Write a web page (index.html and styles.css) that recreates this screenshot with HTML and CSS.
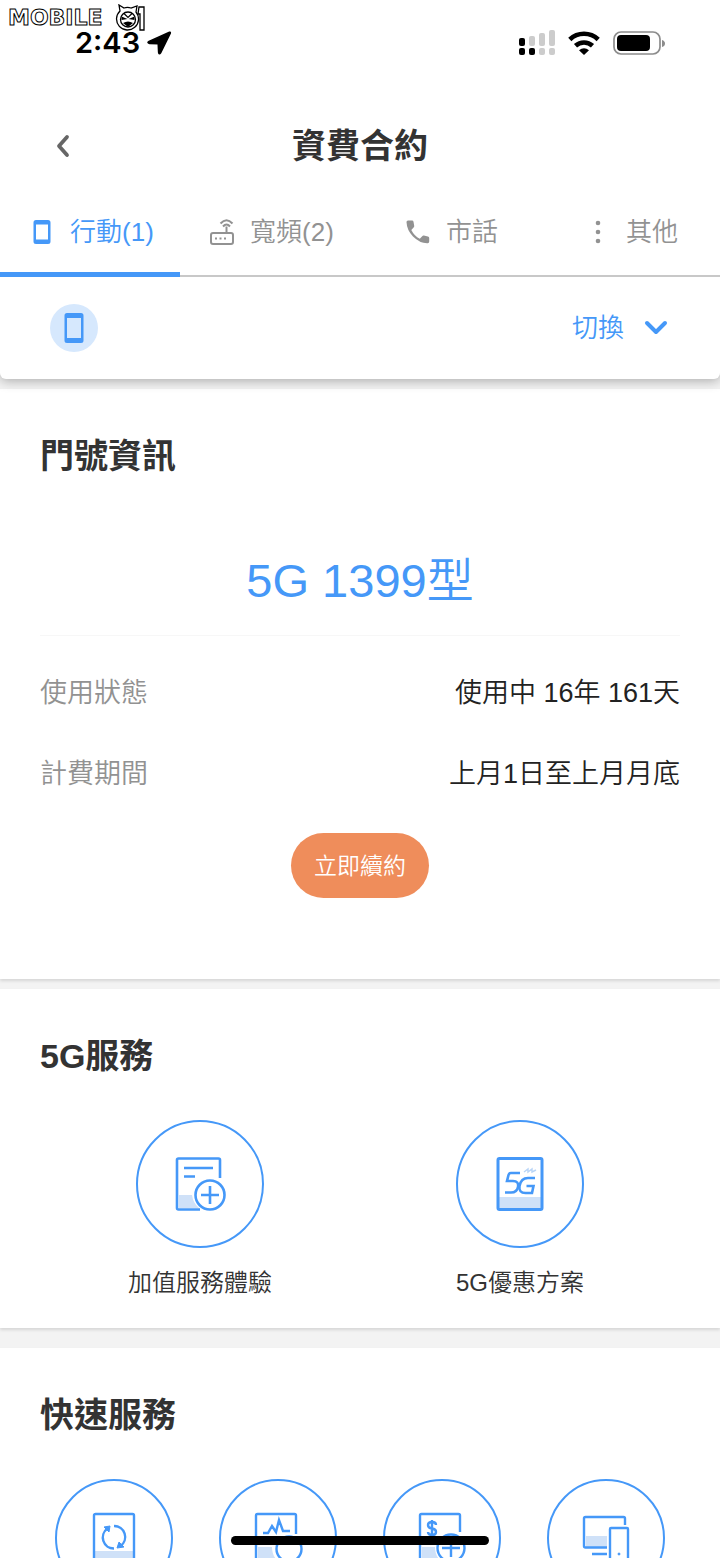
FILE: index.html
```html
<!DOCTYPE html>
<html lang="zh-Hant">
<head>
<meta charset="utf-8">
<meta name="viewport" content="width=device-width, initial-scale=1">
<title>資費合約</title>
<link rel="stylesheet" href="styles.css">
</head>
<body>
<div class="app">
  <div class="watermark">
    <span class="watermark-word">MOBILE</span>
    <svg class="watermark-face" width="32" height="28" viewBox="0 0 32 28" fill="#fff" stroke="#000" stroke-width="1.3">
      <path d="M25 3h5v23h-4V10h-2z"/>
      <path d="M6 7 5 1l5 3a12 12 0 0 1 7 0l6-2-1 6a11 11 0 1 1-16-1z"/>
      <circle cx="14" cy="15.500" r="7.500"/>
      <path fill="#000" stroke="none" d="m7.500 12.500 6 2.500-6 1zM20.500 12.500 14.500 15l6 1zM9 19q5-3 10 0l-5 4z"/>
      <path d="m10 9.500 4 4 4-4" fill="none" stroke-width="1.200"/>
    </svg>
  </div>

  <div class="status">
    <div class="status-time">
      <span>2:43</span>
      <svg width="26" height="26" viewBox="0 0 26 26"><path stroke="#000" stroke-width="1.500" stroke-linejoin="round" d="M23.500 2.200 3 11.400q-2.400 1.400.6 2l8.600.3.400 8.600q.5 2.800 2 .6L24.300 3.200q.3-1.300-.8-1z"/></svg>
    </div>
    <div class="status-icons">
      <svg width="38" height="26" viewBox="0 0 38 26">
        <g fill="#ccc"><rect x="11" y="6" width="6" height="10" rx="2"/><rect x="21" y="3" width="6" height="13" rx="2"/><rect x="31" y="0" width="6" height="16" rx="2"/><rect x="21" y="18" width="6" height="7" rx="2"/><rect x="31" y="18" width="6" height="7" rx="2"/></g>
        <rect x="1" y="8" width="6" height="8" rx="2"/><rect x="1" y="18" width="6" height="7" rx="2"/><rect x="11" y="18" width="6" height="7" rx="2"/>
      </svg>
      <svg width="32" height="24" viewBox="0 0 32 24" fill="none" stroke="#000" stroke-width="4.600">
        <path d="M1.800 8.500a20.500 20.500 0 0 1 28.400 0"/><path d="M7.500 14.800a12.500 12.500 0 0 1 17 0"/>
        <path d="M16 24l-5-4.800q5-4 10 0z" fill="#000" stroke="none"/>
      </svg>
      <svg width="54" height="26" viewBox="0 0 54 26">
        <rect x="2" y="2" width="46" height="22" rx="7" fill="none" stroke="#8c8c8c" stroke-width="1.700"/>
        <rect x="5" y="5" width="33" height="16" rx="4"/>
        <path d="M50 10q3 1 3 3.500T50 17z" fill="#8c8c8c"/>
      </svg>
    </div>
  </div>

  <header class="header">
    <button class="back" type="button" aria-label="返回">
      <svg width="16" height="24" viewBox="0 0 16 24" fill="none" stroke="#666" stroke-width="3.800" stroke-linecap="round" stroke-linejoin="round"><path d="M12 3 4 12l8 9"/></svg>
    </button>
    <h1 class="title">資費合約</h1>
  </header>

  <nav class="tabs">
    <a class="tab tab-active" href="#mobile">
      <svg width="32" height="28" viewBox="0 0 32 28"><path fill="currentColor" fill-rule="evenodd" d="M10 2h12q2.500 0 2.500 2.500v19q0 2.500-2.500 2.500H10q-2.500 0-2.500-2.500v-19Q7.500 2 10 2zm0 4.500v15h12v-15z"/></svg>
      <span>行動(1)</span>
    </a>
    <a class="tab" href="#broadband">
      <svg width="32" height="28" viewBox="0 0 32 28" fill="none" stroke="currentColor" stroke-width="2">
        <rect x="5" y="15" width="22" height="11" rx="2"/><path d="M20.500 15V8.500"/><path d="M14.500 5.500q6-6.500 12 0M17 8.500q3.500-4 7 0"/>
        <path d="M9 20.500h2M13.500 20.500h2M18 20.500h2"/>
      </svg>
      <span>寬頻(2)</span>
    </a>
    <a class="tab" href="#landline">
      <svg width="32" height="28" viewBox="0 0 32 28"><path fill="currentColor" d="M6 2.500h4q1.300 0 1.500 1.300l.7 4q.2 1-.6 1.700L9.300 12q3 6 8.500 8.800l2.400-2.600q.7-.8 1.700-.6l4 .8q1.300.3 1.300 1.500v3.700q0 1.600-1.500 1.600Q18 25.500 11 18.500 4.800 12 4.500 4 4.500 2.500 6 2.500z"/></svg>
      <span>市話</span>
    </a>
    <a class="tab" href="#other">
      <svg width="32" height="28" viewBox="0 0 32 28" fill="currentColor"><circle cx="16" cy="5" r="2.300"/><circle cx="16" cy="14" r="2.300"/><circle cx="16" cy="23" r="2.300"/></svg>
      <span>其他</span>
    </a>
  </nav>

  <div class="account">
    <span class="account-badge">
      <svg width="20" height="30" viewBox="0 0 20 30"><path fill="#4598f8" fill-rule="evenodd" d="M3 0h14q2.500 0 2.500 2.500v25q0 2.500-2.500 2.500H3Q.5 30 .5 27.500v-25Q.5 0 3 0zm0 5v20h14V5z"/></svg>
    </span>
    <button class="switch" type="button">
      <span>切換</span>
      <svg width="24" height="16" viewBox="0 0 24 16" fill="none" stroke="currentColor" stroke-width="4" stroke-linecap="round" stroke-linejoin="round"><path d="m3 3 9 9 9-9"/></svg>
    </button>
  </div>

  <main class="sections">
    <section class="section section-plan">
      <h2 class="heading">門號資訊</h2>
      <p class="plan">5G 1399型</p>
      <dl class="rows">
        <div class="row"><dt>使用狀態</dt><dd>使用中 16年 161天</dd></div>
        <div class="row"><dt>計費期間</dt><dd>上月1日至上月月底</dd></div>
      </dl>
      <button class="renew" type="button">立即續約</button>
    </section>

    <section class="section section-five">
      <h2 class="heading">5G服務</h2>
      <div class="pair">
        <a class="service" href="#value-added">
          <span class="circle">
            <svg width="56" height="60" viewBox="0 0 56 60" fill="none" stroke="#4598f8" stroke-width="2.600">
              <path d="M7 41h13q1 8 7 13H7z" fill="#cfe1f8" stroke="none"/>
              <path d="M48 24V6q0-1.500-1.500-1.500h-40Q5 4.500 5 6v48q0 1.500 1.500 1.500H28"/>
              <path d="M12 14h29M12 22.500h11"/><circle cx="38" cy="41" r="14.500"/><path d="M38 32v18M29 41h18"/>
            </svg>
          </span>
          <span class="service-label">加值服務體驗</span>
        </a>
        <a class="service" href="#offers">
          <span class="circle">
            <svg width="56" height="60" viewBox="0 0 56 60" fill="none" stroke="#4598f8" stroke-width="3">
              <path d="M7 43h42v11H7z" fill="#cfe1f8" stroke="none"/><rect x="6" y="4.500" width="44" height="51" rx="1.500"/>
              <path d="M28 19h-9q-2 0-2.500 2L15 27h6q6 0 5 6-1 5.500-7 5.500h-6" stroke-width="2.600"/>
              <path d="M43 24h-7q-7 0-8.500 8-1 7 6 7h6.500l1.500-7h-7" stroke-width="2.600"/>
              <path d="m32 18 4-3v3l4-3v3l4-2" stroke="#b9d5f7" stroke-width="1.400"/>
            </svg>
          </span>
          <span class="service-label">5G優惠方案</span>
        </a>
      </div>
    </section>

    <section class="section section-quick">
      <h2 class="heading">快速服務</h2>
      <div class="quad">
        <a class="circle circle-small" href="#renewal" aria-label="續約">
          <svg width="56" height="52" viewBox="0 0 56 52" fill="none" stroke="#4598f8" stroke-width="2.400">
            <path d="M9 39h38v10H9z" fill="#cfe1f8" stroke="none"/><rect x="8" y="2" width="40" height="48" rx="1.500"/>
            <path d="M28 14a11 11 0 0 1 6.500 20M28 36.500a11 11 0 0 1-6.500-20"/>
            <path d="m18 15 6-1-1 6zM38 35l-7 1 2-6z" fill="#4598f8" stroke-width="1"/>
          </svg>
        </a>
        <a class="circle circle-small" href="#usage" aria-label="用量">
          <svg width="56" height="52" viewBox="0 0 56 52" fill="none" stroke="#4598f8" stroke-width="2.400">
            <path d="M8 35h14q0 9 6 14H8z" fill="#cfe1f8" stroke="none"/>
            <path d="M46 22V3.500Q46 2 44.500 2h-37Q6 2 6 3.500v45Q6 50 7.500 50H27"/>
            <path d="M13 21h5l4-7 4 6 3-12 4 11h7"/><circle cx="39" cy="37" r="12.500"/>
          </svg>
        </a>
        <a class="circle circle-small" href="#topup" aria-label="儲值">
          <svg width="56" height="52" viewBox="0 0 56 52" fill="none" stroke="#4598f8" stroke-width="2.400">
            <path d="M8 35h13q0 9 6 14H8z" fill="#cfe1f8" stroke="none"/>
            <path d="M46 20V3.500Q46 2 44.500 2h-37Q6 2 6 3.500v45Q6 50 7.500 50H26"/>
            <path d="M22 13q0-3-4-3t-4 3 4 3.500 4 3.500-4 3-4-3M18 8v16"/><circle cx="37" cy="36" r="13.500"/><path d="M37 27v18M28 36h18"/>
          </svg>
        </a>
        <a class="circle circle-small" href="#devices" aria-label="裝置">
          <svg width="56" height="52" viewBox="0 0 56 52" fill="none" stroke="#4598f8" stroke-width="2.400">
            <path d="M8 24h21v11H8z" fill="#cfe1f8" stroke="none"/>
            <path d="M47 13V6.500Q47 5 45.500 5h-38Q6 5 6 6.500V34q0 1.500 1.500 1.500H29M14 42h15"/>
            <rect x="32" y="16" width="18" height="35" rx="1"/><circle cx="41" cy="42" r="1" fill="#4598f8" stroke-width="1"/>
          </svg>
        </a>
      </div>
    </section>
  </main>
  <div class="home-bar"></div>
</div>
</body>
</html>
```
FILE: styles.css
```css
* { box-sizing: border-box; }

body {
  margin: 0;
  background: #f3f3f3;
  color: #333;
  font-family: "Liberation Sans", "Noto Sans CJK TC", sans-serif;
  font-weight: 350;
}

h1, h2, p, dl, dd { margin: 0; }
a { color: inherit; text-decoration: none; }
button { padding: 0; border: 0; background: none; font: inherit; cursor: pointer; }
svg { display: block; flex: none; }

.app {
  position: relative;
  display: flex;
  flex-direction: column;
  height: 100vh;
  overflow: hidden;
}
.app > * { flex: none; }

.watermark {
  position: absolute;
  top: 4px;
  left: 8px;
  display: flex;
  align-items: center;
  gap: 11px;
}
.watermark-word {
  color: #fff;
  font: bold 22px/28px "DejaVu Sans", sans-serif;
  -webkit-text-stroke: 1px #000;
}

.status {
  display: flex;
  justify-content: space-between;
  height: 90px;
  padding: 25px 54px 0 75px;
  background: #fff;
}
.status-time {
  display: flex;
  align-items: center;
  gap: 6px;
  height: 36px;
  color: #000;
  font: 600 29px/36px Inter, sans-serif;
}
.status-icons { display: flex; align-items: center; gap: 12px; height: 36px; }

.header {
  display: grid;
  grid-template-columns: 46px 1fr 46px;
  align-items: center;
  height: 110px;
  padding: 2px 40px 0;
  background: #fff;
}
.back { display: flex; justify-content: center; padding: 8px 0; }
.title { font-size: 34px; line-height: 48px; text-align: center; }

.tabs {
  display: grid;
  grid-template-columns: repeat(4, 1fr);
  background: linear-gradient(#c8c8c8, #c8c8c8) bottom / 100% 2px no-repeat #fff;
}
.tab {
  display: flex;
  align-items: center;
  justify-content: center;
  gap: 12px;
  padding: 16px 0 24px;
  border-bottom: 5px solid transparent;
  color: #929292;
  font-size: 26px;
  line-height: 32px;
}
.tab-active { border-color: #4598f8; color: #4598f8; }

.account {
  position: relative;
  display: flex;
  align-items: center;
  justify-content: space-between;
  height: 102px;
  padding: 0 52px 0 50px;
  border-radius: 0 0 6px 6px;
  background: #fff;
  box-shadow: 0 2px 12px rgba(0, 0, 0, .3);
  clip-path: inset(0 0 -24px);
}
.account-badge {
  display: flex;
  align-items: center;
  justify-content: center;
  width: 48px;
  height: 48px;
  border-radius: 50%;
  background: #d6e8fd;
}
.switch {
  display: flex;
  align-items: center;
  gap: 20px;
  color: #4598f8;
  font-size: 26px;
  line-height: 40px;
}

.sections { display: flex; flex-direction: column; padding-top: 10px; }
.section {
  padding: 43px 40px 27px;
  background: #fff;
  box-shadow: 0 2px 3px rgba(0, 0, 0, .12);
}
.section-plan { padding-bottom: 81px; }
.section-five { margin-top: 10px; }
.section-quick { margin-top: 20px; padding-right: 32px; padding-left: 32px; }
.heading { font-size: 34px; line-height: 48px; }
.section-quick .heading { padding-left: 8px; }

.plan {
  margin-top: 69px;
  padding-bottom: 22px;
  border-bottom: 1px solid #f7f7f7;
  color: #4598f8;
  font-size: 47px;
  line-height: 64px;
  text-align: center;
}
.rows { padding-top: 17px; }
.row {
  display: flex;
  justify-content: space-between;
  font-size: 27px;
  line-height: 81px;
}
.row dt { color: #929292; }
.row dd { color: #222; }

.renew {
  display: block;
  height: 65px;
  margin: 18px auto 0;
  padding: 0 23px 4px;
  border-radius: 33px;
  background: #ef8d5b;
  color: #fff;
  font-size: 23px;
}

.pair { display: grid; grid-template-columns: repeat(2, 1fr); padding-top: 40px; }
.quad { display: grid; grid-template-columns: repeat(4, 1fr); justify-items: center; padding-top: 40px; }
.service { display: flex; flex-direction: column; align-items: center; gap: 17px; }
.service-label { font-size: 24px; line-height: 36px; }
.circle {
  display: flex;
  align-items: center;
  justify-content: center;
  width: 128px;
  height: 128px;
  border: 2px solid #4598f8;
  border-radius: 50%;
}
.circle-small { width: 118px; height: 118px; }

.home-bar {
  position: absolute;
  bottom: 13px;
  left: 50%;
  width: 258px;
  height: 9px;
  margin-left: -129px;
  border-radius: 5px;
  background: #000;
}
```
